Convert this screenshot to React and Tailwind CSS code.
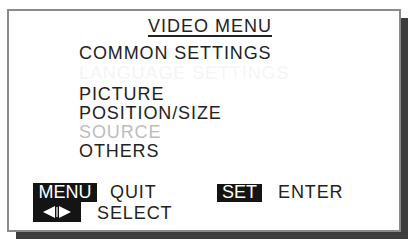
import React from "react";

export default function App() {
  return (
    <div className="w-[415px] h-[240px] bg-white pt-[9px] pl-[7px] font-['Liberation_Sans',Arial,sans-serif] text-[18px] leading-[19px] tracking-[0.9px] text-[#222222] overflow-hidden">
      <div className="w-[394px] h-[223px] border-[2.5px] border-[#8a8a8a] bg-white shadow-[8px_8px_0_-1px_#3d3d3d] flex flex-col">
        <div className="pl-[139px] pt-[6px]">
          <span className="underline decoration-[1.5px] underline-offset-[3px] tracking-[1px]">VIDEO MENU</span>
        </div>
        <div className="pl-[70px] mt-[8px]">COMMON SETTINGS</div>
        <div className="pl-[70px] h-[22px] leading-[20px] text-[#f5f5f5]">LANGUAGE SETTINGS</div>
        <div className="pl-[70px] flex flex-col">
          <div>PICTURE</div>
          <div>POSITION/SIZE</div>
          <div className="text-[#bdbdbd]">SOURCE</div>
          <div>OTHERS</div>
        </div>
        <div className="pl-[24px] mt-[22px] flex flex-col">
          <div className="flex items-center h-[19px]">
            <div className="w-[64px] h-[19px] bg-[#141414] text-white flex items-center justify-center tracking-[0px]">MENU</div>
            <div className="ml-[13px] w-[107px]">QUIT</div>
            <div className="w-[45px] h-[18px] bg-[#141414] text-white flex items-center justify-center tracking-[0px]">SET</div>
            <div className="ml-[16px]">ENTER</div>
          </div>
          <div className="flex items-center h-[20px]">
            <div className="w-[48px] h-[20px] bg-[#141414] flex items-center justify-center">
              <svg width="48" height="20" viewBox="0 0 48 20">
                <polygon points="10,10 22,4 22,16" fill="#ffffff" />
                <rect x="23" y="5" width="2" height="10" fill="#ffffff" opacity="0.6" />
                <polygon points="38,10 26,4 26,16" fill="#ffffff" />
              </svg>
            </div>
            <div className="ml-[16px] mt-[3px]">SELECT</div>
          </div>
        </div>
      </div>
    </div>
  );
}
